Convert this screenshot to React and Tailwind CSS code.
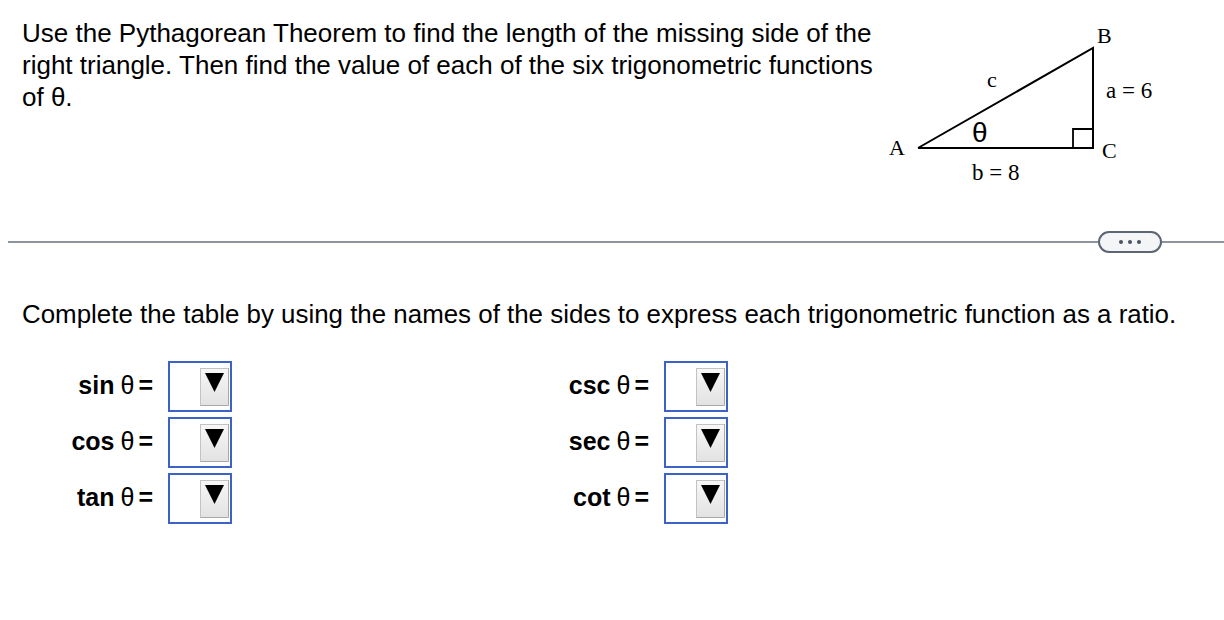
import React from 'react'

const sans = { fontFamily: '"Liberation Sans", Arial, sans-serif' }

function Triangle() {
  return (
    <svg width="330" height="180" viewBox="0 0 330 180" className="shrink-0">
      <g fill="none" stroke="#000" strokeWidth="2">
        <polyline points="58,133 233,133 233,33 58,133" strokeLinejoin="miter" />
        <polyline points="213,133 213,114 233,114" strokeWidth="1.8" />
      </g>
      <g fontFamily='"Liberation Serif", "Times New Roman", serif' fontSize="22" fill="#000">
        <text x="29" y="140">A</text>
        <text x="242" y="143">C</text>
        <text x="237" y="28">B</text>
        <text x="127" y="72">c</text>
        <text x="112" y="165" fontSize="23">b = 8</text>
        <text x="246" y="83" fontSize="23">a = 6</text>
      </g>
      <text x="112" y="127" fontFamily='"Liberation Sans", Arial, sans-serif' fontSize="28" fill="#000">θ</text>
    </svg>
  )
}

function Dropdown() {
  return (
    <div className="w-[64px] h-[51px] border-2 border-[#3c62c8] bg-white flex justify-end items-start pt-[5px] pr-[1px]">
      <div className="w-[29px] h-[38px] border border-[#c3c3c3] border-b-[#a9a9a9] border-r-[#a9a9a9] bg-gradient-to-b from-[#f7f7f7] to-[#e2e2e2] flex justify-center pt-[4px]">
        <svg width="19" height="19" viewBox="0 0 19 19">
          <polygon points="0,0 19,0 9.5,19" fill="#000" />
        </svg>
      </div>
    </div>
  )
}

function Row({ fn }) {
  return (
    <div className="flex items-center h-[56px]">
      <div className="w-[133px] flex justify-end items-center text-[25px] text-black pr-[2px]">
        <span className="font-bold">{fn}</span>
        <span className="ml-[6px]">θ</span>
        <span className="ml-[4px] font-bold">=</span>
      </div>
      <div className="ml-[13px]">
        <Dropdown />
      </div>
    </div>
  )
}

export default function App() {
  return (
    <div className="w-[1224px] h-[620px] bg-white overflow-hidden" style={sans}>
      <div className="flex">
        <p className="ml-[22px] mt-[17px] w-[862px] shrink-0 text-[26px] leading-[32px] text-black">
          Use the Pythagorean Theorem to find the length of the missing side of the right triangle. Then find the value of each of the six trigonometric functions of θ.
        </p>
        <div className="mt-[15px] -ml-[24px]">
          <Triangle />
        </div>
      </div>

      <div className="mt-[36px] ml-[8px] flex items-center h-[22px]">
        <div className="flex-1 h-[2px] bg-[#8e94a2]" />
        <div className="w-[64px] h-[22px] rounded-full border-2 border-[#5d6574] bg-[#f4f5f7] flex items-center justify-center gap-[5px]">
          <span className="w-[4px] h-[4px] rounded-full bg-[#4b5361]" />
          <span className="w-[4px] h-[4px] rounded-full bg-[#4b5361]" />
          <span className="w-[4px] h-[4px] rounded-full bg-[#4b5361]" />
        </div>
        <div className="w-[62px] h-[2px] bg-[#8e94a2]" />
      </div>

      <p className="ml-[22px] mt-[45px] text-[25.9px] leading-[32px] text-black whitespace-nowrap">
        Complete the table by using the names of the sides to express each trigonometric function as a ratio.
      </p>

      <div className="flex ml-[22px] mt-[28px]">
        <div className="flex flex-col">
          <Row fn="sin" />
          <Row fn="cos" />
          <Row fn="tan" />
        </div>
        <div className="flex flex-col ml-[286px]">
          <Row fn="csc" />
          <Row fn="sec" />
          <Row fn="cot" />
        </div>
      </div>
    </div>
  )
}
